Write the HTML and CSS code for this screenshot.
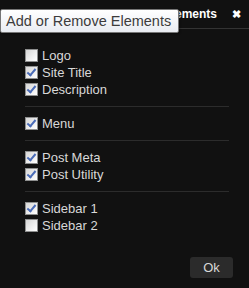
FILE: index.html
```html
<!DOCTYPE html>
<html lang="en">
<head>
    <meta charset="UTF-8">
    <title>Add or Remove Elements</title>
    <link rel="stylesheet" href="styles.css">
</head>
<body>
    <div class="dialog">
        <div class="dialog-header">
            <span class="dialog-title">Add or Remove Elements</span>
            <span class="close-btn">&#10006;</span>
        </div>

        <div class="tooltip">Add or Remove Elements</div>

        <div class="dialog-body">
            <div class="group">
                <label class="option"><span class="box"></span>Logo</label>
                <label class="option"><span class="box checked"></span>Site Title</label>
                <label class="option"><span class="box checked"></span>Description</label>
            </div>
            <div class="group">
                <label class="option"><span class="box checked"></span>Menu</label>
            </div>
            <div class="group">
                <label class="option"><span class="box checked"></span>Post Meta</label>
                <label class="option"><span class="box checked"></span>Post Utility</label>
            </div>
            <div class="group last">
                <label class="option"><span class="box checked"></span>Sidebar 1</label>
                <label class="option"><span class="box"></span>Sidebar 2</label>
            </div>
        </div>

        <div class="dialog-footer">
            <button class="ok-btn">Ok</button>
        </div>
    </div>
</body>
</html>
```

FILE: styles.css
```css
body {
    margin: 0;
    background-color: #111111;
    font-family: "Liberation Sans", Arial, sans-serif;
}

.dialog {
    width: 249px;
    height: 288px;
    position: relative;
    box-sizing: border-box;
    color: #d8d8d8;
}

.dialog-header {
    height: 28px;
    border-bottom: 1px solid #333333;
    display: flex;
    align-items: center;
    justify-content: flex-end;
    padding-right: 8px;
}

.dialog-title {
    font-weight: bold;
    font-size: 12px;
    color: #ffffff;
    margin-right: 15px;
}

.close-btn {
    font-size: 11px;
    color: #ffffff;
    font-weight: bold;
}

.tooltip {
    position: absolute;
    left: 0;
    top: 9px;
    width: 179px;
    height: 24px;
    box-sizing: border-box;
    padding-left: 5px;
    line-height: 22px;
    font-size: 14.5px;
    color: #3c3c3c;
    background: linear-gradient(#ffffff, #e9ecf2);
    border: 1px solid #767676;
    border-radius: 2px;
    box-shadow: 1px 1px 2px rgba(0, 0, 0, 0.4);
}

.dialog-body {
    padding: 10px 20px 0 25px;
}

.group {
    padding: 8px 0 8px;
    border-bottom: 1px solid #2c2c2c;
}

.group.last {
    border-bottom: none;
}

.option {
    display: flex;
    align-items: center;
    height: 17px;
    font-size: 13px;
}

.box {
    width: 11px;
    height: 11px;
    margin-right: 4px;
    border: 1px solid #8e8f8f;
    background: linear-gradient(135deg, #d6d6d6, #ffffff);
    position: relative;
}

.box.checked::after {
    content: "";
    position: absolute;
    left: 3px;
    top: 0px;
    width: 3px;
    height: 7px;
    border-right: 2px solid #4a6cb8;
    border-bottom: 2px solid #4a6cb8;
    transform: rotate(40deg);
}

.dialog-footer {
    display: flex;
    justify-content: flex-end;
    padding: 15px 16px 0 0;
}

.ok-btn {
    width: 43px;
    height: 21px;
    border: none;
    border-radius: 3px;
    background-color: #2b2b2b;
    color: #d8d8d8;
    font-family: "Liberation Sans", Arial, sans-serif;
    font-size: 13px;
    padding: 0;
}
```
